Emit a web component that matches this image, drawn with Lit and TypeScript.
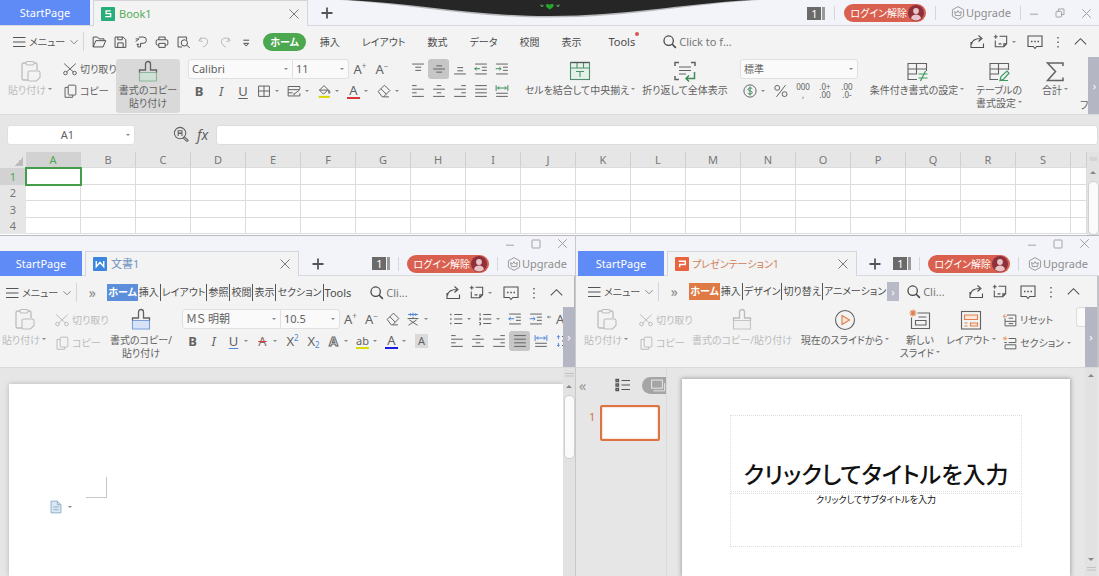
import { LitElement, html, svg, css, nothing, type TemplateResult } from "lit";
import { customElement } from "lit/decorators.js";
import { classMap } from "lit/directives/class-map.js";

/* Icon bodies, drawn on a 20x20 grid unless they are listed in BIG (24x24). */
const ICONS: Record<string, TemplateResult> = {
  menu: svg`<path d="M4 5.500h12.500M4 10h12.500M4 14.500h12.500"/>`,
  chevDown: svg`<path d="M6 8l4 4 4-4"/>`,
  chevUp: svg`<path d="M4 13l6-6 6 6"/>`,
  close: svg`<path d="M5 5l10 10M15 5L5 15"/>`,
  plus: svg`<path d="M10 4.500v11M4.500 10h11" stroke-width="1.800"/>`,
  min: svg`<path d="M5 11.500h10"/>`,
  max: svg`<rect x="5" y="5" width="10" height="10" rx="1"/>`,
  restore: svg`<rect x="5" y="8" width="7" height="7" rx="1"/><path d="M8 8V5h7v7h-3"/>`,
  open: svg`<path d="M3.500 15.500v-11h5l1.500 2h5.500v2M3.500 15.500l3-7h11l-3 7z"/>`,
  save: svg`<path d="M4.500 4.500h9l3 3v8.500h-12zM7.500 16v-5h6v5M7.500 4.500v3h5v-3"/>`,
  pdf: svg`<path d="M4 6.500h3.500M7.500 4.500h5a3.500 3.500 0 0 1 0 7H9.500v4h-3v-3M4 9.500l4-3M5 12.500h3"/>`,
  print: svg`<path d="M6.500 7.500v-3h7v3M6.500 13.500h-1.500a1.500 1.500 0 0 1-1.500-1.500V9a1.500 1.500 0 0 1 1.500-1.500h10a1.500 1.500 0 0 1 1.500 1.500v3a1.500 1.500 0 0 1-1.500 1.500h-1.500M6.500 11.500h7v4.500h-7z"/>`,
  preview: svg`<path d="M9 15.500H4.500v-11h9.500v3"/><circle cx="11.500" cy="11" r="3.500"/><path d="M14 13.500l3.500 3"/>`,
  undo: svg`<path d="M6.500 5l-2 3.500 4 1M4.500 8.500c2-4 9.500-4 9.500 1 0 3-2.500 5-5 6"/>`,
  redo: svg`<path d="M13.500 5l2 3.500-4 1M15.500 8.500c-2-4-9.500-4-9.500 1 0 3 2.500 5 5 6"/>`,
  more: svg`<path d="M7 8h6.500"/><path d="M7.500 11.500h5.500L10.200 14.500z"/>`,
  search: svg`<circle cx="8.500" cy="8.500" r="5.200" stroke-width="1.400"/><path d="M12.500 12.500l4 4" stroke-width="1.700"/>`,
  share: svg`<path d="M4 10v5.500h12.500v-4M4.500 12.500c.5-4.500 5-6 9.500-6M11.500 3.500l3.500 3-3.500 3"/>`,
  tasks: svg`<path d="M3 5h4M5 3v4M9 4.500h7.500v8l-3 3H4.500V9M16.500 12.500h-3v3M8 12.500h3"/>`,
  comment: svg`<path d="M3 4h14v10.500h-5.300l-1.700 2-1.700-2H3z"/><path d="M6 9.500h1.500M9.300 9.500h1.500M12.500 9.500h1.500" stroke-width="1.500"/>`,
  dots: svg`<path d="M10 4.500v1.500M10 9.500v1.500M10 14.500v1.500" stroke-width="1.500"/>`,
  crown: svg`<path d="M10 2l7 4v8l-7 4-7-4V6z"/><path d="M6.700 13.200h6.600l.900-5-2.500 1.600L10 7 8.300 9.800 5.800 8.200z"/>`,
  cut: svg`<path d="M3.500 4l10.500 9.500M16.500 4L6 13.500"/><circle cx="5" cy="14.500" r="2"/><circle cx="15" cy="14.500" r="2"/>`,
  copy: svg`<rect x="8" y="3.500" width="8.500" height="11" rx="1"/><path d="M8 6H4.500v11h8.500v-2.500"/>`,
  borders: svg`<path d="M4 4.500h12v11.500H4zM10 4.500v11.500M4 10h12"/>`,
  cellStyle: svg`<path d="M16.500 8V5H3.500v10.500h13v-3M3.500 8.500h13M3.500 12h5M10 13.500l6-4.500M9 13.500h2"/>`,
  fill: svg`<path d="M5 9l5-5 4.500 4.500-5 5zM5 9h9.500M15.500 9c1 1.500 1.500 3 .5 3.500s-1.500-1-.5-3.500"/><path d="M4 16.500h12.500" stroke="#d8d800" stroke-width="2.200"/>`,
  eraser: svg`<path d="M3.500 10.500l7-7 6 6-7 7H8zM6.500 7.500l6 6M9.500 16.500h6"/>`,
  ruby: svg`<path d="M4 9.500h12M10 8v1.500M6 11l9 6M14 11l-9 6"/><path d="M4.500 5h11M7 3.500v3M10 3v4M13 3.500v3" stroke="#4f86d8"/>`,
  list: svg`<path d="M8 5h9M8 10h9M8 15h9"/><path d="M3.500 5h1.500M3.500 10h1.500M3.500 15h1.500" stroke-width="1.700"/>`,
  numList: svg`<path d="M8 5h9M8 10h9M8 15h9M4.500 3.500v3M3.500 9h1.500v2H3.500M3.500 14h1.500v2.500H3.500"/>`,
  outdent: svg`<path d="M3.500 4.500h13M11 8h5.500M11 11.500h5.500M3.500 15.500h13"/><path d="M9 9.700H3M5.200 8L3 9.700l2.200 1.700" stroke="var(--tint)"/>`,
  indent: svg`<path d="M3.500 4.500h13M11 8h5.500M11 11.500h5.500M3.500 15.500h13"/><path d="M3 9.700h6M7 8l2 1.700-2 1.700" stroke="var(--tint)"/>`,
  vTop: svg`<path d="M3.500 4.500h13M7 8h6.500M7 11.500h6.500"/>`,
  vMid: svg`<path d="M7 6.500h6.500M3.500 10h13M7 13.500h6.500"/>`,
  vBot: svg`<path d="M7 8.500h6.500M7 12h6.500M3.500 15.500h13"/>`,
  left: svg`<path d="M3.500 4h5M3.500 8h13M3.500 12h5M3.500 16h13"/>`,
  center: svg`<path d="M7.500 4h5M3.500 8h13M7.500 12h5M3.500 16h13"/>`,
  right: svg`<path d="M11.500 4h5M3.500 8h13M11.500 12h5M3.500 16h13"/>`,
  justify: svg`<path d="M3.500 4h13M3.500 8h13M3.500 12h13M3.500 16h13"/>`,
  distribute: svg`<path d="M3.500 12.500h13M3.500 16h13"/><path d="M3.500 3.500v6.500M16.500 3.500v6.500M5 6.700h10M7 5L5 6.700l2 1.700M13 5l2 1.700-2 1.700" stroke="var(--tint)"/>`,
  spacing: svg`<path d="M10 5h6M10 10h6M10 15h6"/><path d="M6 4v4M4.500 5.500L6 4l1.500 1.500M6 16v-4M4.500 14.500L6 16l1.500-1.500" stroke="#4f86d8"/>`,
  currency: svg`<circle cx="10" cy="10" r="6.800"/><path d="M12.500 7.500c-1-1.500-4.700-1.200-4.700.6 0 2.300 4.700 1.300 4.700 3.700 0 2-4 2-5 .4M10 5v10" stroke="#3d8b5a"/>`,
  percent: svg`<circle cx="5.800" cy="6.500" r="2.700"/><circle cx="14" cy="13.500" r="2.700"/><path d="M15 3.500L5 16.500"/>`,
  zoomFn: svg`<circle cx="8.500" cy="8.500" r="6"/><path d="M6.500 11.500v-2.500h4v2.500M6.500 8.500V6h4v2.500zM12.500 12l4.500 4.200-1.200 1.300-4.500-4.200"/>`,
  reset: svg`<path d="M6.500 4.500H16.500v12H4.500V8M8.500 8h5M4.500 11.500h12M8.500 14h5"/><path d="M2.500 6h4M4.500 3.500L2.500 6l2 2" stroke="#e59a6b"/>`,
  section: svg`<path d="M8.500 5h8v4.500h-8M4.500 12h12v4.500h-12zM3.500 9.500h3"/><path d="M4.500 2.500v5M2 5h5M2.700 3.200l3.600 3.600M6.300 3.200L2.700 6.800" stroke="#e59a6b" stroke-width=".8"/>`,
  outline: svg`<path d="M8.500 5.500h8.500M8.500 10h8.500M8.500 14.500h8.500"/><path d="M3 4.500h2.500v2H3zM3 9h2.500v2H3zM3 13.500h2.500v2H3z" stroke-width="1.300"/>`,
  doc: svg`<path d="M4.500 3.500h7l4 4v9h-11z" fill="#dce9f4" stroke="#8fb0cc"/><path d="M11.500 3.500v4h4M7 10h6M7 13h6" stroke="#8fb0cc"/>`,
  slideView: svg`<rect x="4" y="4.500" width="12" height="9"/><path d="M6 16.500h12.500V8"/>`,
  back: svg`<path d="M3 6h7M5.500 3.500L3 6l2.500 2.500" stroke-width="1.500"/>`,
  paste: svg`<path d="M10 20H5.500A1.500 1.500 0 0 1 4 18.500v-14A1.500 1.500 0 0 1 5.500 3H8M16 3h1.500A1.500 1.500 0 0 1 19 4.500V10" stroke-width="1.300"/><rect x="8" y="1.500" width="8" height="3.500" rx="1.500"/><path d="M10 12.500A1.500 1.500 0 0 1 11.500 11h9a1.500 1.500 0 0 1 1.500 1.500v5L18.500 21h-7a1.500 1.500 0 0 1-1.500-1.500z"/>`,
  brush: svg`<path d="M3.500 12.500h17v8.500h-17z" fill="var(--brush)" stroke="var(--brush-line)"/><path d="M3.500 12.500V10h6V4a2.500 2.500 0 0 1 5 0v6h6v2.500" stroke-width="1.300"/>`,
  merge: svg`<rect x="2.500" y="2.500" width="19" height="17" fill="#e4f1e9" stroke="#4f8f6c"/><path d="M2.500 8h19M9 2.500V8M15.500 2.500V8M8 11.500h8M12 11.500V17" stroke="#4f8f6c"/><path d="M2.500 2.500h19" stroke="#555" stroke-width="1.300"/>`,
  wrap: svg`<path d="M2 6V2.500h4M18 2.500h4V6M2 16v3.500h4" stroke-width="1.500"/><path d="M6 7h12M6 10.500h12M6 14h7"/><path d="M21.500 12v6.500H13M16 15.500l-3 3 3 3" stroke="#3d8b5a" stroke-width="1.500"/>`,
  cond: svg`<path d="M12 19.500H3v-16h18.500V11M3 9h18.500M3 14h9M11.500 3.500V14"/><path d="M13.500 14h9M13.500 18h9M20.500 11l-5 10" stroke="#3d9a5f" stroke-width="1.200"/>`,
  tableFmt: svg`<path d="M11 19.500H3v-16h18.500V10M3 9h18.500M3 14h9M11.500 3.500V14"/><path d="M13 20.500l1-4 6-5.500 2 2.200-5.500 6zM13 20.500h8" stroke="#3d9a5f" stroke-width="1.200"/>`,
  sum: svg`<path d="M20 6V3H4.500l8 8.500-8 9H20v-3" stroke-width="1.500"/>`,
  play: svg`<circle cx="12" cy="12" r="9.500"/><path d="M9 7.500l7.500 4.500L9 16.500z" fill="#fbe6d8" stroke="#e0804e" stroke-width="1.200"/>`,
  newSlide: svg`<path d="M9.500 5H21.500v15.500h-18V9.500M10.500 9h8M7.500 12.500h10.500v4.500H7.500z"/><path d="M5 1.500v7M1.500 5h7M2.500 2.500l5 5M7.500 2.500l-5 5" stroke="#e0804e"/>`,
  layout: svg`<rect x="2.500" y="3.500" width="19" height="17.500"/><path d="M5.500 7h13v4.500h-13zM11.500 15h7v3h-7z" fill="#fbe6d8" stroke="#e0804e"/><path d="M5.500 15h3M5.500 18h3" stroke="#e0804e"/>`,
};
const BIG = new Set(["paste", "brush", "merge", "wrap", "cond", "tableFmt", "sum", "play", "newSlide", "layout"]);

const icon = (name: string, size = 0) => {
  const box = BIG.has(name) ? 24 : 20;
  const px = size || (box === 24 ? 24 : 18);
  return html`<svg class="ic" width=${px} height=${px} viewBox="0 0 ${box} ${box}" aria-hidden="true">${ICONS[name]}</svg>`;
};
const caret = html`<i class="caret"></i>`;

interface Small { icon: string; label: string; drop?: boolean; on?: boolean; text?: string; mark?: string; look?: string }
const s = (icon: string, label: string, extra: Partial<Small> = {}): Small => ({ icon, label, ...extra });
/* A button whose face is a letter; look picks its treatment, mark is a small sign beside it. */
const t = (text: string, label: string, look = "", extra: Partial<Small> = {}): Small => ({ icon: "", label, text, look, ...extra });

const small = (b: Small) => html`<button
  class=${classMap({ ib: true, drop: !!b.drop, on: !!b.on, pale: b.icon === "undo" || b.icon === "redo" })}
  aria-label=${b.label}>${b.text ? html`<span class="glyph ${b.look ?? ""}">${b.text}${b.mark ? html`<small>${b.mark}</small>` : nothing}</span>` : icon(b.icon)}${b.drop ? caret : nothing}</button>`;

const strip = (items: Small[]) => html`<div class="strip">${items.map(small)}</div>`;

const big = (name: string, lines: string[], o: { drop?: boolean; cls?: string } = {}) => html`
  <button class="big ${o.cls ?? ""}">
    ${icon(name)}
    <span class="cap">${lines.map((l, i) => html`<span>${l}${o.drop && i === lines.length - 1 ? caret : nothing}</span>`)}</span>
  </button>`;

const picker = (id: string, label: string, value: string, cls: string) => html`
  <span class="pick ${cls}"><select id=${id} aria-label=${label}><option>${value}</option></select>${caret}</span>`;

const clip = (cls = "") => html`
  <div class="clip ${cls}">
    <button>${icon("cut")}<span>切り取り</span></button>
    <button>${icon("copy")}<span>コピー</span></button>
  </div>`;

const account = html`
  <button class="badge" aria-label="開いているウィンドウ"><b>1</b><i></i></button>
  <i class="bar"></i>
  <button class="login">ログイン解除
    <svg width="16" height="16" viewBox="0 0 16 16" aria-hidden="true"><circle cx="8" cy="8" r="8" fill="#8e2f3c"/><circle cx="8" cy="6" r="2.900" fill="#e9c4c6"/><path d="M3 13.500c.5-3 2.500-4 5-4s4.500 1 5 4a8 8 0 0 1-10 0z" fill="#e9c4c6"/></svg>
  </button>
  <i class="bar"></i>
  <button class="upgrade">${icon("crown", 16)}Upgrade</button>`;

const controls = (mid: string) => html`
  <div class="controls">
    <button aria-label="最小化">${icon("min", 16)}</button>
    <button aria-label="最大化">${icon(mid, 16)}</button>
    <button aria-label="閉じる">${icon("close", 17)}</button>
  </div>`;

const mark = {
  s: svg`<path d="M10.500 4.200H5.500v2.900h4.800v3.200H4.500" />`,
  w: svg`<path d="M3.500 4.300v6l4-4.500 4 4.500v-6"/>`,
  p: svg`<path d="M4 4.500h7v3.500H5v3"/>`,
};
const tabs = (title: string, logo: keyof typeof mark) => html`
  <a class="start" href="#start">StartPage</a>
  <div class="doc-tab">
    <svg class="logo" width="14" height="14" viewBox="0 0 15 15" aria-hidden="true"><rect width="15" height="15" rx="1"/>${mark[logo]}</svg>
    <span>${title}</span>
    <button aria-label="タブを閉じる">${icon("close", 18)}</button>
  </div>
  <button class="add" aria-label="新しいタブ">${icon("plus", 20)}</button>`;

const tools = (drop: boolean) => html`
  <div class="tools">
    <button aria-label="共有">${icon("share", 20)}</button>
    <button class="task" aria-label="タスク">${icon("tasks", 19)}${drop ? caret : nothing}</button>
    <button aria-label="コメント">${icon("comment", 20)}</button>
    <button aria-label="その他">${icon("dots", 18)}</button>
    <button aria-label="リボンを折りたたむ">${icon("chevUp", 19)}</button>
  </div>`;

const menuButton = html`<button class="menu">${icon("menu", 20)}<span>メニュー</span>${icon("chevDown", 18)}</button>`;

const arrows = html`<svg class="split" width="9" height="9" viewBox="0 0 9 9" aria-hidden="true"><path d="M0 3.500h9M0 6h9"/></svg>`;

@customElement("app-root")
export class AppRoot extends LitElement {
  static styles = css`
    :host {
      display: grid;
      grid-template: 235px minmax(341px, 1fr) / 575fr 524fr;
      min-height: 100vh;
      overflow: hidden;
      background: #e6e6e6;
      color: #626262;
      font: 11px/14px "Noto Sans", "Noto Sans CJK JP", sans-serif;
      font-feature-settings: "palt";
    }
    *, *::before { box-sizing: border-box; }
    button, select, input { font: inherit; font-feature-settings: inherit; color: inherit; margin: 0; padding: 0; border: 0; background: none; outline: none; }
    button { display: flex; align-items: center; justify-content: center; white-space: nowrap; }
    a { color: inherit; text-decoration: none; }
    .ic { display: block; flex: none; fill: none; stroke: currentColor; stroke-width: 1.1; }
    .caret { flex: none; display: inline-block; border: 2px solid transparent; border-top-color: #888; border-bottom: 0; vertical-align: 4px; margin-left: 2px; }

    .win { display: flex; flex-direction: column; min-width: 0; overflow: hidden; background: #f3f3f3; position: relative; }
    .sheet-win { grid-column: 1 / -1; --accent: #4ca84f; --logo: #27ae78; --tint: #3d8b5a; --brush: #cfe0d4; --brush-line: #8fb59d; --slot: 22px; --drop: 30px; }
    .text-win { --accent: #5b8fdc; --title: #6f93bd; --logo: #3c86dd; --tint: #4f86d8; --brush: #d7e4f8; --brush-line: #7ba0dc; --slot: 21px; --drop: 29px; box-shadow: inset -1px 0 #b5b5b8; border-top: 1px solid #b9b9bc; }
    .show-win { --accent: #e07a45; --title: #cf7f57; --logo: #ea6340; --tint: #e0804e; --brush: #f0f0f0; --brush-line: #c5c5c5; --slot: 21px; --drop: 29px; border-left: 1px solid #c9c9cc; border-top: 1px solid #b9b9bc; box-shadow: inset -2px 0 #c4c4c8; }

    /* title bars */
    .title { display: flex; flex: none; align-items: stretch; height: 26px; background: #f3f4f9; color: #8e8e8e; position: relative; }
    .title::before { content: ""; position: absolute; inset: auto 0 0; height: 1px; background: #d9dade; }
    .title > * { position: relative; }
    .start { width: var(--start); flex: none; background: #5f8bf7; color: #fff; display: flex; align-items: center; justify-content: center; }
    .sheet-win .title { --start: 90px; --tab: 215px; }
    .sheet-win .title .start { margin-bottom: 1px; }
    .text-win .title { --start: 82px; --tab: 214px; height: 25px; padding-right: 8px; }
    .show-win .title { --start: 86px; --tab: 190px; height: 25px; padding: 0 11px 0 2px; }
    .doc-tab { width: var(--tab); flex: none; margin-left: 3px; padding: 0 4px 0 7px; display: flex; align-items: center; gap: 4px; background: #f3f3f3; border: solid #d4d5da; border-width: 1px 1px 0; color: var(--title, #55ab58); }
    .show-win .doc-tab { gap: 3px; }
    .show-win .doc-tab span { font-size: 10px; }
    .doc-tab button { margin-left: auto; color: #777; }
    .logo rect { fill: var(--logo); }
    .logo path { fill: none; stroke: #fff; stroke-width: 1.5; }
    .add { width: 38px; color: #555; }
    .account { margin-left: auto; display: flex; align-items: center; gap: 8px; }
    .bar { flex: none; width: 1px; height: 14px; background: #d6d6da; }
    .badge { gap: 1px; height: 13px; align-items: stretch; }
    .badge b { width: 14px; background: #6a6a6a; color: #fff; font-weight: 400; line-height: 13px; }
    .badge i { width: 3px; background: #9a9a9a; }
    .login { height: 18px; gap: 1px; padding: 0 2px 0 6px; border-radius: 9px; background: #d9604f; color: #fff; font-size: 10px; }
    .sheet-win .account { gap: 9px; }
    .sheet-win .upgrade { margin-left: 5px; }
    .controls { display: flex; justify-content: flex-end; align-items: center; color: #999; }
    .controls button { width: 26px; }
    .text-win > .controls, .show-win > .controls { height: 15px; flex: none; background: #f3f4f9; }
    .show-win > .controls { padding-right: 2px; }
    .notch { position: absolute; left: 50%; top: 0; width: 420px; height: 20px; margin-left: -210px; z-index: 2; }

    /* menu rows */
    .menus { display: flex; flex: none; align-items: center; height: 31px; padding: 0 9px 0 9px; }
    .text-win .menus { padding: 2px 9px 0 2px; }
    .show-win .menus { padding: 0 16px 0 8px; }
    .menus > .bar { height: 19px; }
    .menu { color: #555; font-size: 10px; }
    .menu .ic:last-child { color: #888; }
    .quick { display: flex; width: 179px; padding-left: 4px; }
    .quick .ib { width: 21px; color: #505050; }
    .quick .ib.pale { color: #b5b5b5; }
    .names { display: flex; align-items: center; gap: 22px; font-size: 10px; color: #4c4c4c; }
    .names a { white-space: nowrap; }
    .names .latin { font-size: 11px; }
    .names .home { background: var(--accent); color: #fff; font-weight: 700; }
    .sheet-win .home { height: 18px; border-radius: 9px; padding: 1px 7px; margin-right: -8px; line-height: 16px; }
    .tools-tab { position: relative; margin-left: 5px; }
    .tools-tab::after { content: ""; position: absolute; right: -4px; top: -3px; width: 4px; height: 4px; border-radius: 2px; background: #d8555a; }
    .find { color: #777; gap: 0; }
    .find .ic { color: #444; }
    .sheet-win .find { margin-left: 26px; }
    .dense .names { gap: 0; }
    .dense .names a { padding: 0 1px; line-height: 17px; border-right: 1px solid #555; }
    .dense .names a:first-child, .dense .names a:last-of-type { border: 0; }
    .over { width: 30px; color: #888; font-size: 14px; }
    .dense .find { margin-left: 16px; }
    .show-win.show-win .find { margin-left: 6px; }
    .scroll-next { width: 12px; height: 19px; background: #b8bbc7; color: #fff; }
    .tools { margin-left: auto; display: flex; align-items: center; gap: 4px; color: #505050; }
    .task { margin-right: 5px; }
    .show-win .tools { gap: 4px; }

    /* ribbons */
    .ribbon { display: grid; flex: none; height: 58px; border-bottom: 1px solid #d9d9d9; overflow: hidden; }
    .sheet-win .ribbon { grid-template-columns: 60px 56px 64px 224px 116px 120px 90px 136px 102px 62px 50px 1fr 12px; }
    .text-win .ribbon { height: 61px; grid-template-columns: 48px 60px 66px 272px 1fr 12px; }
    .show-win .ribbon { height: 61px; grid-template-columns: 60px 52px 108px 98px 52px 50px 80px 1fr 14px; }
    .big { flex-direction: column; justify-content: flex-start; padding-top: 3px; align-self: stretch; min-width: 0; }
    .text-win .big, .show-win .big { padding-top: 1px; gap: 2px; }
    .cap { display: flex; flex-direction: column; align-items: center; font-size: 10px; line-height: 13px; }
    .pale { color: #bcbcbc; }
    .pressed { background: #d9d9d9; border-radius: 3px; margin: 2px 0 1px; padding-top: 1px; }
    .clip { display: flex; flex-direction: column; padding: 1px 0 0 1px; font-size: 10px; }
    .text-win .clip { padding-left: 5px; }
    .clip button { height: 22px; justify-content: flex-start; gap: 1px; }
    .clip.pale button { height: 23px; }
    .group { display: flex; flex-direction: column; padding-top: 1px; min-width: 0; overflow: hidden; }
    .group.font { padding-left: 8px; }
    .group.para { padding-left: 3px; }
    .group.num { padding-left: 10px; }
    .line { display: flex; align-items: center; }
    .strip { display: flex; height: 22px; align-items: center; }
    .ib { width: var(--slot); height: 20px; flex: none; }
    .ib.drop { width: var(--drop); justify-content: flex-start; padding-left: 1px; }
    .ib.on { background: #c6c6c6; border-radius: 3px; }
    .glyph { font-size: 13px; line-height: 15px; min-width: 13px; text-align: center; }
    .glyph small { font-size: 8px; line-height: 8px; vertical-align: 5px; color: #777; }
    .drop .glyph { margin: 0 2px; }
    .bold { font-weight: 700; }
    .italic { font-style: italic; }
    .under { text-decoration: underline; text-underline-offset: 2px; }
    .under.tinted { text-decoration-color: var(--tint); }
    .strike { text-decoration: line-through #d8343a; color: #8a6a6a; }
    .low small { vertical-align: -2px; color: #4f86d8; }
    .high small { color: #4f86d8; }
    .ink { line-height: 13px; border-bottom: 2px solid; }
    .red { border-color: #d8343a; }
    .blue { border-color: #1a1ae6; }
    .yellow { border-color: #dcdc00; font-size: 11px; }
    .hollow { color: #f3f3f3; font-weight: 700; -webkit-text-stroke: 1px #666; }
    .boxed { font-size: 11px; line-height: 14px; background: #dadada; }
    .digits { font-size: 8px; line-height: 8px; white-space: pre-line; }
    .pick { display: flex; align-items: center; height: 20px; background: #fafafa; border: 1px solid #e0e0e0; border-radius: 3px; padding-right: 4px; }
    .pick select { flex: 1; min-width: 0; height: 18px; padding-left: 3px; appearance: none; }
    .pick.face { width: 105px; border-radius: 3px 0 0 3px; }
    .text-win .face { width: 99px; }
    .pick.size { width: 56px; border-left: 0; border-radius: 0 3px 3px 0; }
    .text-win .size { width: 59px; }
    .pick.fmt { width: 118px; margin: 1px 0; }
    .fmt select { font-size: 10px; }
    .sheet-win .para .ib { width: 21px; }
    .cut-off { align-self: end; padding-bottom: 2px; font-size: 10px; }
    .more { background: #b4b7c3; color: #fff; }
    .show-win .more, .show-win .scrollbar { margin-right: 2px; }
    .slides { display: flex; flex-direction: column; padding: 1px 0 0 5px; font-size: 10px; }
    .slides button { height: 23px; gap: 1px; justify-content: flex-start; }
    .stub { height: 20px; background: #fafafa; border: 1px solid #ddd; border-right: 0; border-radius: 3px 0 0 3px; }
    .prev-letter { display: flex; align-items: center; font-size: 13px; }

    /* spreadsheet */
    .formula { display: flex; flex: none; align-items: center; height: 37px; padding: 2px 1px 0 7px; background: #e6e6e6; }
    .formula .pick { width: 128px; background: #fff; }
    .formula select { text-align: center; text-align-last: center; }
    .fx { margin: 0 8px 0 37px; gap: 6px; }
    .fx em { font: italic 14px/16px "Noto Sans", sans-serif; }
    .formula input { flex: 1; min-width: 0; height: 20px; background: #fff; border: 1px solid #dcdcdc; border-radius: 3px; }
    .grid-area { display: flex; flex: 1; min-height: 0; overflow: hidden; }
    .cells { flex: 1; min-width: 0; overflow: hidden; background: #fff; }
    table { width: 100%; table-layout: fixed; border-collapse: separate; border-spacing: 0; }
    th, td { height: 17px; padding: 0; border: solid #dcdcdc; border-width: 0 1px 1px 0; font-weight: 400; line-height: 14px; }
    th { background: #e6e6e6; color: #777; border-right-color: #cfcfcf; }
    thead th { height: 16px; }
    tbody tr:nth-child(even) > * { height: 16px; }
    th.row { border-width: 0; width: 26px; }
    th.col { width: 55px; }
    th.here { background: #d2d2d2; color: #4ca84f; }
    td.sel { outline: 2px solid #459c49; outline-offset: -1px; }
    .corner { display: block; margin: 3px 3px 0 auto; width: 9px; height: 9px; background: linear-gradient(135deg, transparent 50%, #bcbcbc 50%); }
    .scrollbar { width: 12px; flex: none; display: flex; flex-direction: column; align-items: center; background: #e2e2e2; }
    .split path { stroke: #c2c2c2; fill: none; }
    .scrollbar .split { margin: 3px 0; }
    .up { border: 3px solid transparent; border-bottom-color: #888; border-top: 0; margin: 6px 0 7px; }
    .down { border: 3px solid transparent; border-top-color: #888; border-bottom: 0; margin-top: auto; }
    .thumb { width: 11px; height: 64px; background: #fafafa; border: 1px solid #cfcfcf; border-radius: 5px; }

    /* text document */
    .body { flex: 1; display: flex; min-height: 0; background: #e6e6e6; }
    .page { flex: 1; margin: 16px 0 0 9px; background: #fff; box-shadow: 0 0 5px #b5b5b5; clip-path: inset(-6px 0 0 -9px); }
    .margin-mark { width: 21px; height: 21px; margin: 93px 0 0 77px; border: solid #c8c8c8; border-width: 0 1px 1px 0; }
    .paste-opt { margin: 0 0 0 38px; gap: 1px; }
    .text-win .split { margin: 2px 0 0; }

    /* slides */
    .thumbs { width: 91px; flex: none; border-right: 1px solid #dadada; overflow: hidden; }
    .views { display: flex; align-items: center; height: 34px; color: #555; }
    .views .fold { width: 18px; font-size: 15px; color: #999; }
    .views .outline { margin-left: 24px; }
    .views .slide-view { margin-left: 9px; width: 24px; height: 17px; flex: none; background: #a5a5a5; border-radius: 9px 0 0 9px; color: #e8e8e8; justify-content: flex-end; }
    .thumb-row { display: flex; gap: 5px; padding: 3px 0 0 13px; color: #d9713f; }
    .thumb-row span { width: 6px; padding-top: 5px; }
    .thumb-row i { width: 60px; height: 36px; background: #fff; border: 2px solid #dd7343; border-radius: 2px; box-shadow: inset 0 0 2px #eba988; }
    .slide { flex: 1; margin: 11px 15px 0; padding: 36px 48px 0; background: #fff; box-shadow: 0 0 4px 1px #a8a8a8; display: flex; flex-direction: column; gap: 1px; }
    .hold { border: 1px dotted #dcdcdc; text-align: center; margin: 0; display: flex; justify-content: center; font-family: "Noto Sans CJK JP", sans-serif; color: #111; white-space: nowrap; }
    .hold.head { height: 77px; align-items: flex-end; font-size: 23px; line-height: 36px; font-weight: 500; }
    .hold.subt { height: 54px; font-size: 9px; line-height: 12px; }
  `;

  private sheet() {
    const cols = "ABCDEFGHIJKLMNOPQRS".split("");
    return html`<div class="cells"><table>
      <thead><tr><th class="row" aria-label="すべて選択"><i class="corner"></i></th>
        ${cols.map((c, i) => html`<th class=${i === 0 ? "col here" : "col"} scope="col">${c}</th>`)}<th></th></tr></thead>
      <tbody>${[1, 2, 3, 4].map((r) => html`<tr><th class=${r === 1 ? "row here" : "row"} scope="row">${r}</th>
        ${cols.map((_, i) => html`<td class=${r === 1 && i === 0 ? "sel" : ""}></td>`)}<td></td></tr>`)}</tbody>
    </table></div>`;
  }

  private spreadsheet() {
    return html`<section class="win sheet-win" aria-label="Book1">
      <svg class="notch" viewBox="0 0 420 20" aria-hidden="true">
        <path d="M0 0C70 4 130 17.500 210 17.500S350 4 420 0z" fill="#b9babd"/>
        <path d="M8 0C80 4 135 16 210 16S340 4 412 0z" fill="#262626"/>
        <path d="M206 4.500c1-.8 3-.8 3.800.5.800-1.300 3-1.300 3.800-.5.800 1.500-1 3.500-3.800 5-2.800-1.500-4.600-3.500-3.800-5z" fill="#25a52c"/>
        <path d="M200.500 5l3 .5-1.500 1.500zM219.500 5l-3 .5 1.500 1.500z" stroke="#5c8f5e"/>
      </svg>
      <header class="title">${tabs("Book1", "s")}<div class="account">${account}<i class="bar"></i></div>${controls("restore")}</header>
      <nav class="menus">
        ${menuButton}<i class="bar"></i>
        <div class="quick">${[s("open", "開く"), s("save", "保存"), s("pdf", "PDF"), s("print", "印刷"), s("preview", "印刷プレビュー"), s("undo", "元に戻す"), s("redo", "やり直し"), s("more", "クイックアクセス")].map(small)}</div>
        <div class="names">
          <a class="home" href="#home">ホーム</a>
          ${["挿入", "レイアウト", "数式", "データ", "校閲", "表示"].map((n) => html`<a href="#tab">${n}</a>`)}
          <a class="tools-tab latin" href="#tools">Tools</a>
        </div>
        <button class="find">${icon("search", 18)}Click to f...</button>
        ${tools(true)}
      </nav>
      <div class="ribbon">
        ${big("paste", ["貼り付け"], { drop: true, cls: "pale" })}
        ${clip()}
        ${big("brush", ["書式のコピー", "貼り付け"], { cls: "pressed" })}
        <div class="group font">
          <div class="line">${picker("x-face", "フォント", "Calibri", "face")}${picker("x-size", "サイズ", "11", "size")}${strip([t("A", "拡大", "", { mark: "+" }), t("A", "縮小", "", { mark: "−" })])}</div>
          ${strip([t("B", "太字", "bold"), t("I", "斜体", "italic"), t("U", "下線", "under"), s("borders", "罫線", { drop: true }), s("cellStyle", "セルのスタイル", { drop: true }), s("fill", "塗りつぶし", { drop: true }), t("A", "文字色", "ink red", { drop: true }), s("eraser", "クリア", { drop: true })])}
        </div>
        <div class="group para">
          ${strip([s("vTop", "上揃え"), s("vMid", "上下中央", { on: true }), s("vBot", "下揃え"), s("outdent", "インデント解除"), s("indent", "インデント")])}
          ${strip([s("left", "左揃え"), s("center", "中央揃え"), s("right", "右揃え"), s("justify", "両端揃え"), s("distribute", "均等割り付け")])}
        </div>
        ${big("merge", ["セルを結合して中央揃え"], { drop: true })}
        ${big("wrap", ["折り返して全体表示"])}
        <div class="group num">
          ${picker("x-fmt", "表示形式", "標準", "fmt")}
          ${strip([s("currency", "通貨", { drop: true }), s("percent", "パーセント"), t("000\n,", "桁区切り", "digits"), t(".0+\n.00", "小数点以下を増やす", "digits"), t(".00\n.0-", "小数点以下を減らす", "digits")])}
        </div>
        ${big("cond", ["条件付き書式の設定"], { drop: true })}
        ${big("tableFmt", ["テーブルの", "書式設定"], { drop: true })}
        ${big("sum", ["合計"], { drop: true })}
        <span class="cut-off">フ</span>
        <button class="more" aria-label="次へ">›</button>
      </div>
      <div class="formula">
        ${picker("x-name", "名前ボックス", "A1", "")}
        <button class="fx" aria-label="関数の挿入">${icon("zoomFn", 19)}<em>fx</em></button>
        <input id="x-formula" aria-label="数式" />
      </div>
      <div class="grid-area">${this.sheet()}
        <div class="scrollbar">${arrows}<i class="up"></i><i class="thumb"></i></div>
      </div>
    </section>`;
  }

  private writer() {
    return html`<section class="win text-win" aria-label="文書1">
      ${controls("max")}
      <header class="title">${tabs("文書1", "w")}<div class="account">${account}</div></header>
      <nav class="menus dense">
        ${menuButton}<i class="bar"></i><button class="over" aria-label="前のタブ">»</button>
        <div class="names"><a class="home" href="#home">ホーム</a>
          ${["挿入", "レイアウト", "参照", "校閲", "表示", "セクション"].map((n) => html`<a href="#tab">${n}</a>`)}
          <a class="latin" href="#tools">Tools</a></div>
        <button class="find">${icon("search", 18)}Cli...</button>
        ${tools(true)}
      </nav>
      <div class="ribbon">
        ${big("paste", ["貼り付け"], { drop: true, cls: "pale" })}
        ${clip("pale")}
        ${big("brush", ["書式のコピー/", "貼り付け"])}
        <div class="group font">
          <div class="line">${picker("w-face", "フォント", "ＭＳ 明朝", "face")}${picker("w-size", "サイズ", "10.5", "size")}${strip([t("A", "拡大", "", { mark: "+" }), t("A", "縮小", "", { mark: "−" }), s("eraser", "クリア"), s("ruby", "ルビ", { drop: true })])}</div>
          ${strip([t("B", "太字", "bold"), t("I", "斜体", "italic"), t("U", "下線", "under tinted", { drop: true }), t("A", "取り消し線", "strike", { drop: true }), t("X", "上付き", "high", { mark: "2" }), t("X", "下付き", "low", { mark: "2" }), t("A", "文字の効果", "hollow", { drop: true }), t("ab", "蛍光ペン", "ink yellow", { drop: true }), t("A", "文字色", "ink blue", { drop: true }), t("A", "網かけ", "boxed")])}
        </div>
        <div class="group">
          <div class="line">${strip([s("list", "箇条書き", { drop: true }), s("numList", "段落番号", { drop: true }), s("outdent", "インデント解除"), s("indent", "インデント")])}<button class="prev-letter" aria-label="文字幅">${icon("back", 10)}A</button></div>
          ${strip([s("left", "左揃え"), s("center", "中央揃え"), s("right", "右揃え"), s("justify", "両端揃え", { on: true }), s("distribute", "均等割り付け"), s("spacing", "行間")])}
        </div>
        <button class="more" aria-label="次へ">›</button>
      </div>
      <div class="body">
        <div class="page"><div class="margin-mark"></div><button class="paste-opt" aria-label="貼り付けのオプション">${icon("doc")}${caret}</button></div>
        <div class="scrollbar">${arrows}<i class="up"></i><i class="thumb"></i></div>
      </div>
    </section>`;
  }

  private presentation() {
    return html`<section class="win show-win" aria-label="プレゼンテーション1">
      ${controls("max")}
      <header class="title">${tabs("プレゼンテーション1", "p")}<div class="account">${account}</div></header>
      <nav class="menus dense">
        ${menuButton}<i class="bar"></i><button class="over" aria-label="前のタブ">»</button>
        <div class="names"><a class="home" href="#home">ホーム</a>
          ${["挿入", "デザイン", "切り替え", "アニメーション"].map((n) => html`<a href="#tab">${n}</a>`)}
          <button class="scroll-next" aria-label="次のタブ">›</button></div>
        <button class="find">${icon("search", 18)}Cli...</button>
        ${tools(false)}
      </nav>
      <div class="ribbon">
        ${big("paste", ["貼り付け"], { drop: true, cls: "pale" })}
        ${clip("pale")}
        ${big("brush", ["書式のコピー/貼り付け"], { cls: "pale" })}
        ${big("play", ["現在のスライドから"], { drop: true })}
        ${big("newSlide", ["新しい", "スライド"], { drop: true })}
        ${big("layout", ["レイアウト"], { drop: true })}
        <div class="slides"><button>${icon("reset")}リセット</button><button>${icon("section")}セクション${caret}</button></div>
        <div class="stub"></div>
        <button class="more" aria-label="次へ">›</button>
      </div>
      <div class="body">
        <aside class="thumbs">
          <div class="views"><button class="fold" aria-label="折りたたむ">«</button><button class="outline" aria-label="アウトライン">${icon("outline", 20)}</button><button class="slide-view" aria-label="スライド">${icon("slideView", 18)}</button></div>
          <div class="thumb-row"><span>1</span><i></i></div>
        </aside>
        <div class="slide"><h1 class="hold head">クリックしてタイトルを入力</h1><p class="hold subt">クリックしてサブタイトルを入力</p></div>
        <div class="scrollbar"><i class="up"></i><i class="down"></i>${arrows}</div>
      </div>
    </section>`;
  }

  render() {
    return html`${this.spreadsheet()}${this.writer()}${this.presentation()}`;
  }
}
